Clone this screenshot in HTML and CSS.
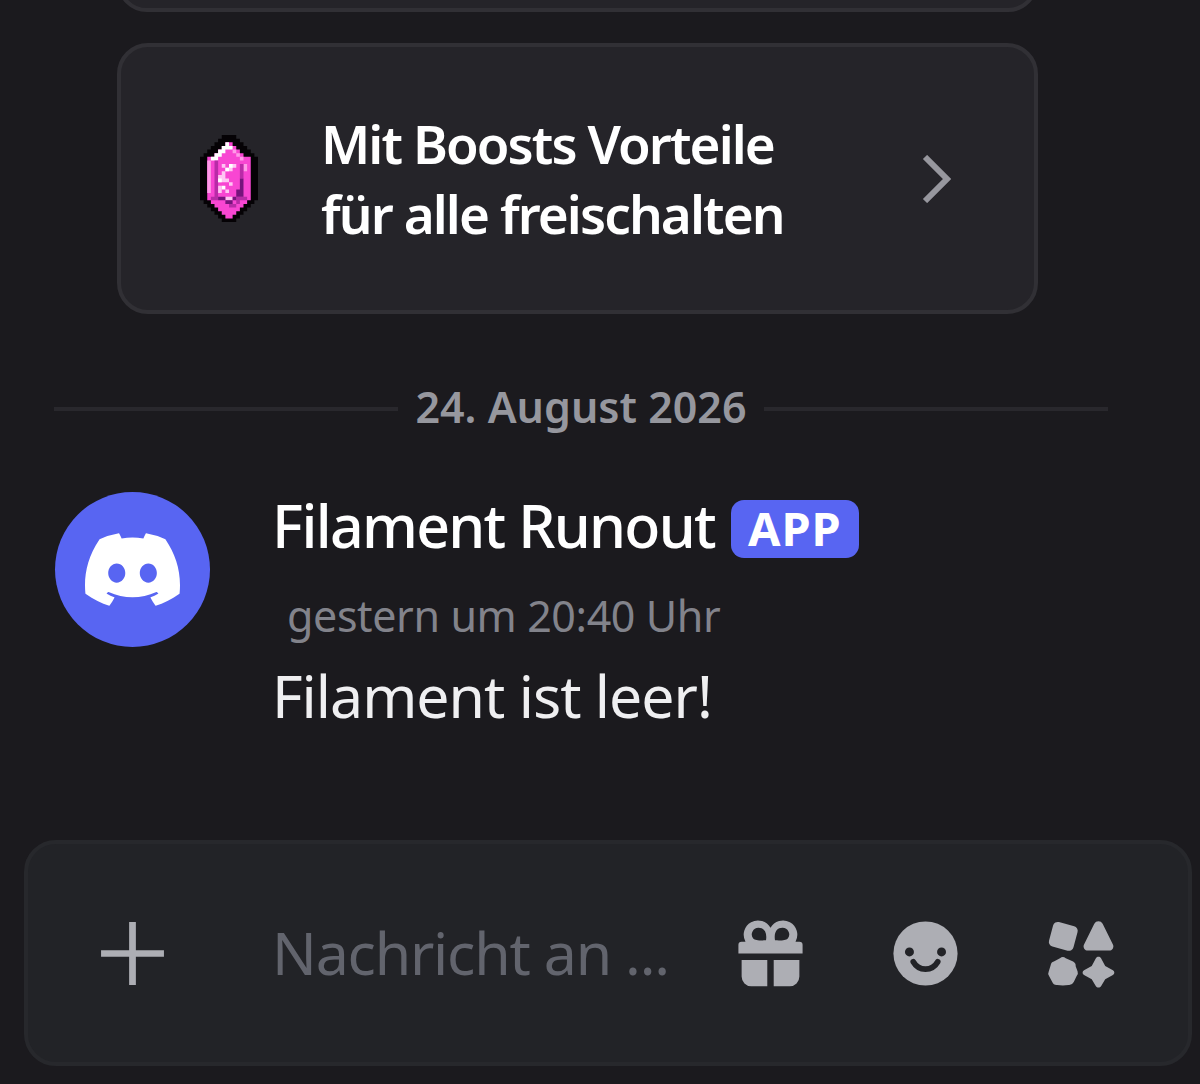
FILE: index.html
```html
<!DOCTYPE html>
<html lang="de">
<head>
  <meta charset="UTF-8" />
  <meta name="viewport" content="width=device-width, initial-scale=1.0"/>
  <title>Filament Runout</title>
  <link rel="stylesheet" href="styles.css">
</head>
<body>
  <main class="chat">
    <div class="card card-cut"></div>

    <div class="card boost">
      <svg class="gem" viewBox="0 0 16 24">
        <path fill="#050205" d="M6 0h4v1h1v1h1v1h1v1h1v1h1v1h1v12h-1v1h-1v1h-1v1h-1v1h-1v1h-1v1H6v-1H5v-1H4v-1H3v-1H2v-1H1v-1H0V6h1V5h1V4h1V3h1V2h1V1h1z"/>
        <path fill="#f846d2" d="M7 2h2v1h1v1h1v1h1v1h2v12h-1v1h-1v1h-1v1h-1v1H9v1H7v-1H6v-1H5v-1H4v-1H3v-1H2V6h2V5h1V4h1V3h1z"/>
        <path fill="#fff" d="M7 2h1v1h1v1H7v1H6v1H5v1H3V6h1V5h1V4h1V3h1z"/>
        <path fill="#ff9ae8" d="M2 7h1v9H2zM9 4h1v1h1v1h1v1h-1V6h-1V5H9zM12 8h1v2h-1z"/>
        <path fill="#b82ba7" d="M4 7h1v10H4zM11 8h1v4h-1zM3 17h2v1H3zM10 17h3v1h-2v1h-1v1H8v-1h2z"/>
        <path fill="#ffc5f3" d="M6 8h1v1H6zM8 8h2v1H9v1H7v1H6v-1h1V9h1zM5 11h2v2H5zM7 12h1v1H7zM5 14h1v2H5zM8 13h1v1H8zM7 15h1v1H7zM7 17h2v1H7z"/>
        <path fill="#fff" d="M8 8h1v1H8zM7 9h1v1H7zM5 12h1v1H5zM6 14h1v1H6z"/>
        <path fill="#76147c" d="M11 12h1v5h-2v1H9v1H7v-1H5v-1h2v1h2v-1h1v-2h1z"/>
      </svg>
      <div class="boost-title">Mit Boosts Vorteile<br>für alle freischalten</div>
      <svg class="chevron" viewBox="0 0 30 48"><path d="M4 2l22 22L4 46"/></svg>
    </div>

    <div class="divider"><span>24. August 2026</span></div>

    <article class="message">
      <div class="avatar">
        <svg viewBox="0 0 24 24"><path d="M20.317 4.3698a19.7913 19.7913 0 00-4.8851-1.5152.0741.0741 0 00-.0785.0371c-.211.3753-.4447.8648-.6083 1.2495-1.8447-.2762-3.68-.2762-5.4868 0-.1636-.3933-.4058-.8742-.6177-1.2495a.077.077 0 00-.0785-.037 19.7363 19.7363 0 00-4.8852 1.515.0699.0699 0 00-.0321.0277C.5334 9.0458-.319 13.5799.0992 18.0578a.0824.0824 0 00.0312.0561c2.0528 1.5076 4.0413 2.4228 5.9929 3.0294a.0777.0777 0 00.0842-.0276c.4616-.6304.8731-1.2952 1.226-1.9942a.076.076 0 00-.0416-.1057c-.6528-.2476-1.2743-.5495-1.8722-.8923a.077.077 0 01-.0076-.1277c.1258-.0943.2517-.1923.3718-.2914a.0743.0743 0 01.0776-.0105c3.9278 1.7933 8.18 1.7933 12.0614 0a.0739.0739 0 01.0785.0095c.1202.099.246.1981.3728.2924a.077.077 0 01-.0066.1276 12.2986 12.2986 0 01-1.873.8914.0766.0766 0 00-.0407.1067c.3604.698.7719 1.3628 1.225 1.9932a.076.076 0 00.0842.0286c1.961-.6067 3.9495-1.5219 6.0023-3.0294a.077.077 0 00.0313-.0552c.5004-5.177-.8382-9.6739-3.5485-13.6604a.061.061 0 00-.0312-.0286zM8.02 15.3312c-1.1825 0-2.1569-1.0857-2.1569-2.419 0-1.3332.9555-2.4189 2.157-2.4189 1.2108 0 2.1757 1.0952 2.1568 2.419 0 1.3332-.9555 2.4189-2.1569 2.4189zm7.9748 0c-1.1825 0-2.1569-1.0857-2.1569-2.419 0-1.3332.9554-2.4189 2.1569-2.4189 1.2108 0 2.1757 1.0952 2.1568 2.419 0 1.3332-.946 2.4189-2.1568 2.4189Z"/></svg>
      </div>
      <div class="body">
        <div class="head"><span class="name">Filament Runout</span><span class="badge">APP</span></div>
        <div class="time">gestern um 20:40 Uhr</div>
        <div class="text">Filament ist leer!</div>
      </div>
    </article>

    <div class="composer">
      <svg class="icon plus" viewBox="0 0 24 24"><path d="M12 2.200v19.600M2.200 12h19.600"/></svg>
      <span class="placeholder">Nachricht an ...</span>
      <div class="tools">
        <svg class="icon" viewBox="0 0 24 24">
          <path fill-rule="evenodd" d="M4.200 8.300A4 4 0 0 1 12 4a4 4 0 0 1 7.800 4.300H21a1 1 0 0 1 1 1V12H2V9.300a1 1 0 0 1 1-1zM10.600 7.900C11 5.400 10 4 8.300 4a2.050 2.050 0 0 0-1.700 3.300c.6.600 2 .7 4 .6zM13.400 7.900c2 .1 3.400 0 4-.6A2.050 2.050 0 0 0 15.700 4c-1.700 0-2.700 1.400-2.300 3.900z"/>
          <path d="M3 14h8v8.200H6a3 3 0 0 1-3-3zM13 14h8v5.200a3 3 0 0 1-3 3h-5z"/>
        </svg>
        <svg class="icon" viewBox="0 0 24 24">
          <circle cx="12" cy="12" r="10"/>
          <circle class="hole" cx="7" cy="11.500" r="1.400"/>
          <circle class="hole" cx="17" cy="11.500" r="1.400"/>
          <path class="smile" d="M8.200 14.600c1.700 3 5.900 3 7.600 0"/>
        </svg>
        <svg class="icon" viewBox="0 0 24 24">
          <rect x="2.700" y="2.700" width="7.900" height="7.900" rx="1.500" transform="rotate(15 6.600 6.600)"/>
          <path d="M16.300 2.700a1.500 1.500 0 0 1 2.600 0l3.200 6.500a1.300 1.300 0 0 1-1.200 1.900h-6.600a1.300 1.300 0 0 1-1.200-1.900z"/>
          <path d="M5.600 13.500Q6.500 12.700 7.400 13.500L9.700 14.500Q10.600 15 10.500 16L11.100 17.600Q11.400 18.400 10.800 19L9.900 20.900Q9.400 21.900 8.300 21.800L6.500 22 4.700 21.800Q3.600 21.900 3.200 20.900L2.200 19Q1.700 18.400 2.100 17.600L2.700 15.700Q2.800 14.700 3.700 14.500Z"/>
          <path d="M17.600 13c.4 0 .7.200.8.500l1.300 2.400 2.400 1.300c.6.300.6 1.200 0 1.500l-2.400 1.300-1.300 2.200c-.3.500-1.300.5-1.600 0l-1.300-2.200-2.400-1.300c-.6-.3-.6-1.200 0-1.500l2.400-1.300 1.300-2.400c.1-.3.4-.5.800-.5z"/>
        </svg>
      </div>
    </div>
  </main>
</body>
</html>
```
FILE: styles.css
```css
* {
  box-sizing: border-box;
}

body {
  margin: 0;
  background: #1b1a1e;
  color: #fff;
  font-family: "Noto Sans", sans-serif;
}

.chat {
  height: 1084px;
  overflow: hidden;
  display: flex;
  flex-direction: column;
}

svg {
  display: block;
  flex: none;
}

.card {
  width: 921px;
  margin-left: 117px;
  background: #252429;
  border: 4px solid #313035;
  border-radius: 31px;
  flex: none;
}

.card-cut {
  height: 60px;
  margin-top: -48px;
}

.boost {
  height: 271px;
  margin-top: 31px;
  padding: 0 83px 0 79px;
  display: flex;
  align-items: center;
}

.gem {
  width: 58px;
  height: 93px;
}

.boost-title {
  flex: 1;
  margin-left: 63px;
  font-size: 53px;
  line-height: 70px;
  font-weight: 600;
  letter-spacing: -1.9px;
  white-space: nowrap;
}

.chevron {
  width: 30px;
  height: 48px;
  fill: none;
  stroke: #97979e;
  stroke-width: 6;
}

.divider {
  margin: 65px 92px 0 54px;
  height: 60px;
  display: flex;
  align-items: center;
  gap: 17px;
  color: #96979e;
  font-size: 43px;
  font-weight: 600;
  white-space: nowrap;
}

.divider::before,
.divider::after {
  content: "";
  flex: 1;
  height: 4px;
  background: #29282d;
}

.divider span {
  padding-bottom: 5px;
}

.message {
  margin: 53px 0 0 55px;
  display: flex;
  gap: 62px;
}

.avatar {
  width: 155px;
  height: 155px;
  border-radius: 50%;
  background: #5865f2;
  display: flex;
  align-items: center;
  justify-content: center;
}

.avatar svg {
  width: 95px;
  height: 95px;
  fill: #fff;
}

.body {
  white-space: nowrap;
}

.head {
  height: 84px;
  display: flex;
  align-items: flex-start;
}

.name {
  font-size: 59px;
  line-height: 66px;
  font-weight: 500;
  letter-spacing: -1.7px;
}

.badge {
  margin: 8px 0 0 16px;
  width: 128px;
  height: 58px;
  border-radius: 13px;
  background: #5865f2;
  font-size: 47px;
  line-height: 57px;
  font-weight: 700;
  letter-spacing: 1px;
  text-align: center;
}

.time {
  padding-left: 15px;
  height: 80px;
  line-height: 80px;
  font-size: 43px;
  letter-spacing: -0.4px;
  color: #82838b;
}

.text {
  font-size: 59px;
  line-height: 79px;
  color: #efeff1;
  letter-spacing: -1px;
}

.composer {
  margin: 105px 8px 0 24px;
  height: 226px;
  flex: none;
  border: 4px solid #27282c;
  border-radius: 32px;
  background: #222327;
  padding: 0 69px 0 66px;
  display: flex;
  align-items: center;
}

.icon {
  width: 77px;
  height: 77px;
  fill: #adaeb4;
}

.plus {
  stroke: #adaeb4;
  stroke-width: 2.1;
}

.placeholder {
  margin-left: 101px;
  padding-bottom: 3px;
  flex: 1;
  font-size: 59px;
  line-height: 80px;
  color: #62646d;
  letter-spacing: -1.2px;
  white-space: nowrap;
}

.tools {
  display: flex;
  gap: 78px;
}

.hole {
  fill: #222327;
}

.smile {
  fill: none;
  stroke: #222327;
  stroke-width: 1.8;
  stroke-linecap: round;
}
```
